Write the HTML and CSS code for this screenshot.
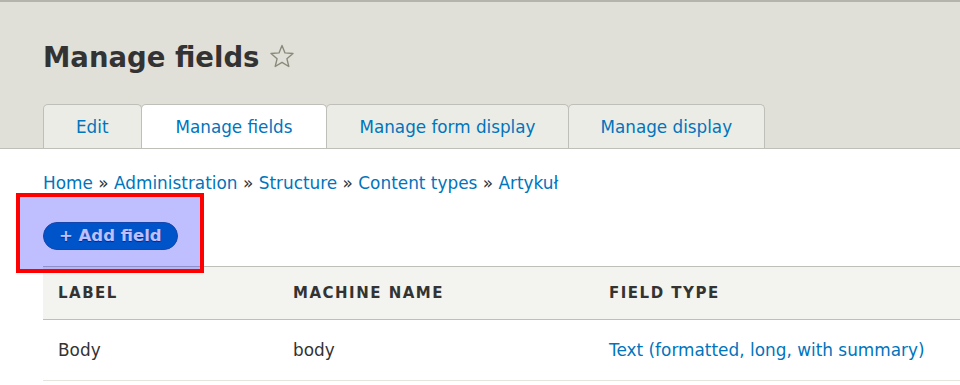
FILE: index.html
```html
<!DOCTYPE html>
<html lang="pl">
<head>
    <meta charset="UTF-8">
    <meta name="viewport" content="width=device-width, initial-scale=1.0">
    <title>Manage fields</title>
    <link rel="stylesheet" href="styles.css">
</head>
<body>
    <header class="page-header">
        <h1 class="page-title">Manage fields
            <svg class="shortcut-star" width="26" height="26" viewBox="0 0 26 26">
                <path d="M13 2.5l3 7.4 8 .6-6.1 5.2 1.9 7.8L13 19.3l-6.8 4.2 1.9-7.8L2 10.5l8-.6z" fill="none" stroke="#8a8a7c" stroke-width="1.4" stroke-linejoin="round"/>
            </svg>
        </h1>
        <ul class="tabs">
            <li class="tab"><a href="#">Edit</a></li>
            <li class="tab is-active"><a href="#">Manage fields</a></li>
            <li class="tab"><a href="#">Manage form display</a></li>
            <li class="tab"><a href="#">Manage display</a></li>
        </ul>
    </header>

    <main class="content">
        <nav class="breadcrumb">
            <a href="#">Home</a> » <a href="#">Administration</a> » <a href="#">Structure</a> » <a href="#">Content types</a> » <a href="#">Artykuł</a>
        </nav>

        <div class="actions">
            <a href="#" class="button-primary">+ Add field</a>
            <div class="highlight"></div>
        </div>

        <table class="field-table">
            <thead>
                <tr>
                    <th class="col-label">Label</th>
                    <th class="col-machine">Machine name</th>
                    <th>Field type</th>
                </tr>
            </thead>
            <tbody>
                <tr>
                    <td>Body</td>
                    <td>body</td>
                    <td><a href="#">Text (formatted, long, with summary)</a></td>
                </tr>
            </tbody>
        </table>
    </main>
</body>
</html>
```

FILE: styles.css
```css
* {
    box-sizing: border-box;
    margin: 0;
    padding: 0;
}
body {
    font-family: "DejaVu Sans", Verdana, sans-serif;
    font-size: 16.9px;
    color: #333;
    background: #fff;
    overflow: hidden;
    width: 1200px;
}
a {
    color: #0074bd;
    text-decoration: none;
}
/* header */
.page-header {
    background: #e0e0d8;
    border-top: 2px solid #b4b4ae;
    border-bottom: 1px solid #bfbfba;
    padding: 36px 0 0 43px;
}
.page-title {
    font-size: 27.5px;
    line-height: 38px;
    font-weight: bold;
    color: #333;
    display: flex;
    align-items: center;
    gap: 10px;
}
.shortcut-star {
    margin-top: -2px;
}
.tabs {
    list-style: none;
    display: flex;
    margin-top: 28px;
}
.tab {
    background: #ecece6;
    border: 1px solid #bfbfba;
    border-bottom: none;
    border-radius: 5px 5px 0 0;
    margin-right: -1px;
}
.tab a {
    display: block;
    height: 43px;
    line-height: 44px;
    padding: 0 32px;
    font-size: 16.8px;
}
.tab.is-active {
    background: #fff;
    position: relative;
    z-index: 1;
}
.tab.is-active a {
    padding: 0 34px;
}
/* content */
.content {
    padding: 0 0 0 43px;
}
.breadcrumb {
    margin-top: 23px;
    line-height: 22px;
}
.actions {
    position: relative;
    margin-top: 28px;
    height: 28px;
}
.button-primary {
    display: inline-block;
    height: 28px;
    line-height: 26px;
    padding: 0 15px;
    border-radius: 14px;
    background: #0071b8;
    border: 1px solid #1e5c90;
    color: #fff;
    font-size: 16.5px;
    font-weight: bold;
    text-shadow: 0 1px 1px rgba(0,0,0,0.5);
}
.highlight {
    position: absolute;
    left: -27px;
    top: -29px;
    width: 188px;
    height: 80px;
    border: 4px solid #ff0000;
    background: rgba(0,0,255,0.25);
}
.field-table {
    margin-top: 16px;
    width: 1100px;
    border-collapse: collapse;
}
.field-table th {
    background: #f3f3ef;
    border-top: 1px solid #bfbfba;
    border-bottom: 1px solid #bfbfba;
    text-align: left;
    text-transform: uppercase;
    font-weight: bold;
    letter-spacing: 1.5px;
    font-size: 15px;
    height: 53px;
    padding: 0 15px;
}
.field-table td {
    height: 61px;
    padding: 0 15px;
    border-bottom: 1px solid #e6e4df;
}
.col-label {
    width: 235px;
}
.col-machine {
    width: 316px;
}
```
